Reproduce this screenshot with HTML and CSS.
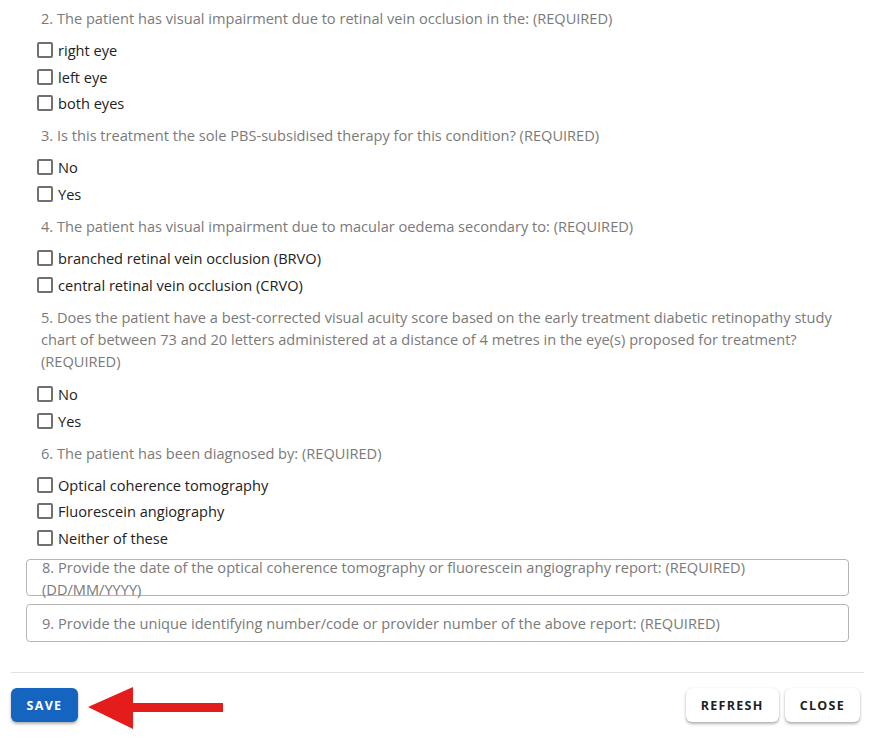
FILE: index.html
```html
<!DOCTYPE html>
<html>
<head>
<meta charset="utf-8">
<link rel="stylesheet" href="styles.css">
</head>
<body>
<div class="page">
  <div class="form">
    <p class="question">2. The patient has visual impairment due to retinal vein occlusion in the: (REQUIRED)</p>
    <div class="options">
      <label class="option"><span class="box"></span>right eye</label>
      <label class="option"><span class="box"></span>left eye</label>
      <label class="option"><span class="box"></span>both eyes</label>
    </div>
    <p class="question">3. Is this treatment the sole PBS-subsidised therapy for this condition? (REQUIRED)</p>
    <div class="options">
      <label class="option"><span class="box"></span>No</label>
      <label class="option"><span class="box"></span>Yes</label>
    </div>
    <p class="question">4. The patient has visual impairment due to macular oedema secondary to: (REQUIRED)</p>
    <div class="options">
      <label class="option"><span class="box"></span>branched retinal vein occlusion (BRVO)</label>
      <label class="option"><span class="box"></span>central retinal vein occlusion (CRVO)</label>
    </div>
    <p class="question question-long">5. Does the patient have a best-corrected visual acuity score based on the early treatment diabetic retinopathy study chart of between 73 and 20 letters administered at a distance of 4 metres in the eye(s) proposed for treatment? (REQUIRED)</p>
    <div class="options">
      <label class="option"><span class="box"></span>No</label>
      <label class="option"><span class="box"></span>Yes</label>
    </div>
    <p class="question">6. The patient has been diagnosed by: (REQUIRED)</p>
    <div class="options last">
      <label class="option"><span class="box"></span>Optical coherence tomography</label>
      <label class="option"><span class="box"></span>Fluorescein angiography</label>
      <label class="option"><span class="box"></span>Neither of these</label>
    </div>
    <div class="field field-tall"><span class="placeholder">8. Provide the date of the optical coherence tomography or fluorescein angiography report: (REQUIRED) (DD/MM/YYYY)</span></div>
    <div class="field"><span class="placeholder">9. Provide the unique identifying number/code or provider number of the above report: (REQUIRED)</span></div>
  </div>
  <div class="footer">
    <div class="left">
      <button class="btn btn-primary">Save</button>
      <svg class="arrow" width="140" height="46" viewBox="0 0 140 46">
        <polygon points="0,20 45,0 45,16 135,16 135,25 45,25 45,42" fill="#e41c1c"/>
      </svg>
    </div>
    <div class="right">
      <button class="btn">Refresh</button>
      <button class="btn">Close</button>
    </div>
  </div>
</div>
</body>
</html>
```

FILE: styles.css
```css
* { box-sizing: border-box; }
html, body { margin: 0; padding: 0; background: #fff; }
body {
  font-family: "Open Sans", "Noto Sans", sans-serif;
  font-size: 14.6px;
  color: #222;
}
.page { width: 878px; height: 748px; position: relative; }
.form { padding: 7px 29px 0 26px; }
.question {
  margin: 0;
  padding-left: 15px;
  padding-right: 0;
  color: #7a7a7a;
  line-height: 22px;
}
.question-long { margin-bottom: 1.5px; }
.options { padding: 7.65px 0 7.65px 11px; }
.option {
  display: flex;
  align-items: center;
  height: 26.7px;
  color: #222;
  font-size: 14.6px;
}
.box {
  width: 16px;
  height: 16px;
  border: 2px solid #707070;
  border-radius: 2px;
  margin-right: 5px;
  flex: none;
}
.options.last { padding-bottom: 0; }
.field {
  margin-top: 8px;
  border: 1px solid #b5b5b5;
  border-radius: 4px;
  height: 38px;
  padding: 0 60px 0 15px;
  display: flex;
  align-items: center;
  color: #7a7a7a;
  line-height: 22px;
}
.field-tall { align-items: flex-start; overflow: visible; margin-top: 7.5px; height: 37px; }
.field-tall .placeholder { margin-top: -4px; position: relative; }
.footer {
  position: absolute;
  left: 11px;
  right: 14px;
  top: 672px;
  border-top: 1px solid #e2e2e2;
  display: flex;
  justify-content: space-between;
  padding-top: 15px;
  padding-right: 4px;
}
.left { position: relative; }
.right { display: flex; gap: 6px; }
.btn {
  font-family: "Open Sans", sans-serif;
  font-size: 12.5px;
  font-weight: 700;
  letter-spacing: 1.3px;
  text-transform: uppercase;
  height: 34px;
  padding: 0 15px;
  border: none;
  border-radius: 6px;
  background: #fff;
  color: #1f1f1f;
  box-shadow: 0 2px 3px rgba(0,0,0,0.3), 0 0 1px rgba(0,0,0,0.15);
}
.btn-primary { background: #1565c0; color: #fff; width: 67px; padding: 0; }
.arrow { position: absolute; left: 77px; top: -1px; }
```
